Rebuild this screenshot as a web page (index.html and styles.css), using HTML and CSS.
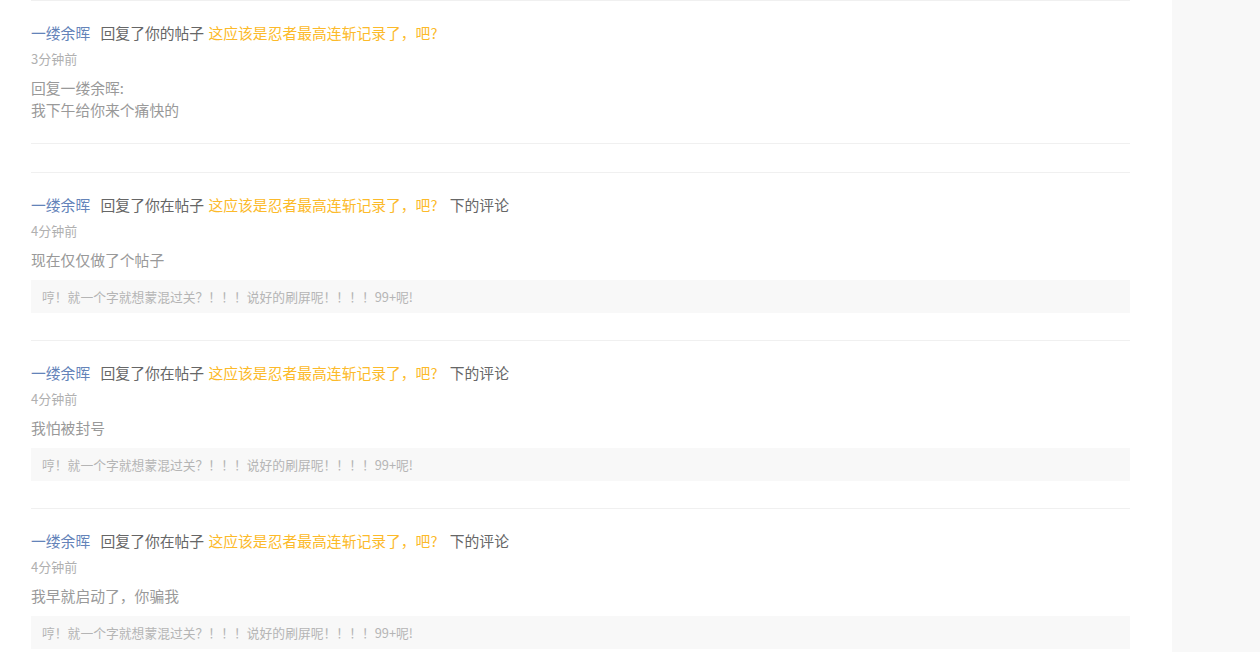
FILE: index.html
```html
<!DOCTYPE html>
<html lang="zh-CN">
<head>
<meta charset="utf-8">
<title>消息</title>
<link rel="stylesheet" href="styles.css">
</head>
<body>
<div class="page">
  <main class="main">
    <ul class="msg-list">
      <li class="msg msg--post">
        <div class="msg-head">
          <a class="user" href="#">一缕余晖</a>
          <span class="action">回复了你的帖子</span>
          <a class="topic" href="#">这应该是忍者最高连斩记录了，吧?</a>
        </div>
        <div class="msg-time">3分钟前</div>
        <div class="msg-body">回复一缕余晖:<br>我下午给你来个痛快的</div>
      </li>
      <li class="msg">
        <div class="msg-head">
          <a class="user" href="#">一缕余晖</a>
          <span class="action">回复了你在帖子</span>
          <a class="topic" href="#">这应该是忍者最高连斩记录了，吧?</a>
          <span class="suffix">下的评论</span>
        </div>
        <div class="msg-time">4分钟前</div>
        <div class="msg-body">现在仅仅做了个帖子</div>
        <div class="msg-quote">哼！就一个字就想蒙混过关？！！！说好的刷屏呢！！！！99+呢!</div>
      </li>
      <li class="msg">
        <div class="msg-head">
          <a class="user" href="#">一缕余晖</a>
          <span class="action">回复了你在帖子</span>
          <a class="topic" href="#">这应该是忍者最高连斩记录了，吧?</a>
          <span class="suffix">下的评论</span>
        </div>
        <div class="msg-time">4分钟前</div>
        <div class="msg-body">我怕被封号</div>
        <div class="msg-quote">哼！就一个字就想蒙混过关？！！！说好的刷屏呢！！！！99+呢!</div>
      </li>
      <li class="msg">
        <div class="msg-head">
          <a class="user" href="#">一缕余晖</a>
          <span class="action">回复了你在帖子</span>
          <a class="topic" href="#">这应该是忍者最高连斩记录了，吧?</a>
          <span class="suffix">下的评论</span>
        </div>
        <div class="msg-time">4分钟前</div>
        <div class="msg-body">我早就启动了，你骗我</div>
        <div class="msg-quote">哼！就一个字就想蒙混过关？！！！说好的刷屏呢！！！！99+呢!</div>
      </li>
    </ul>
  </main>
  <aside class="sidebar"></aside>
</div>
</body>
</html>
```

FILE: styles.css
```css
* {
  box-sizing: border-box;
}

html, body {
  margin: 0;
  padding: 0;
  height: 100%;
  overflow: hidden;
  background: #fff;
  font-family: "Noto Sans CJK SC", "Noto Sans", "Liberation Sans", sans-serif;
}

.page {
  display: flex;
  min-height: 100%;
}

.main {
  flex: 1;
  padding: 0 42px 0 31px;
}

.sidebar {
  width: 88px;
  flex: none;
  background: #f8f8f8;
}

.msg-list {
  list-style: none;
  margin: 0;
  padding: 0;
}

.msg {
  border-top: 1px solid #f0f0f0;
  padding: 21px 0 27px;
}

.msg--post {
  border-bottom: 1px solid #f0f0f0;
  padding-bottom: 22px;
  margin-bottom: 28px;
}

.msg-head {
  font-size: 14.8px;
  line-height: 22px;
  color: #666;
  white-space: nowrap;
}

.msg-head a {
  text-decoration: none;
}

.user {
  color: #6483b9;
  margin-right: 7px;
}

.action {
  color: #666;
}

.topic {
  color: #fcba2a;
  margin-left: 1px;
  margin-right: 9px;
}

.suffix {
  color: #666;
}

.msg-time {
  margin-top: 6px;
  font-size: 13px;
  line-height: 18px;
  color: #b0b0b0;
}

.msg-body {
  margin-top: 9px;
  font-size: 14.8px;
  line-height: 22px;
  color: #999;
}

.msg-quote {
  margin-top: 9px;
  height: 33px;
  padding: 0 11px;
  background: #f8f8f8;
  font-size: 12.8px;
  line-height: 33px;
  color: #b5b5b5;
  white-space: nowrap;
}
```
